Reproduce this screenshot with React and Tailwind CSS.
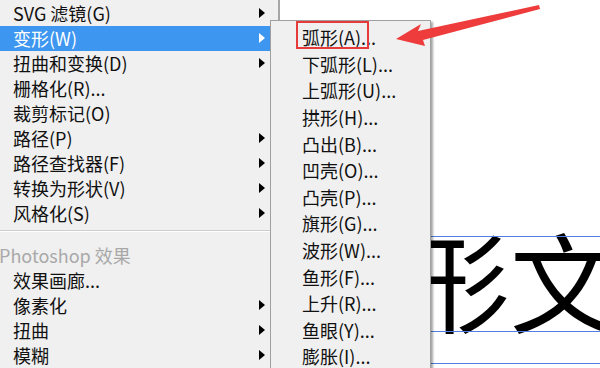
import React from "react";

const mainItems = [
  { label: "SVG 滤镜(G)", sub: true },
  { label: "变形(W)", sub: true, active: true },
  { label: "扭曲和变换(D)", sub: true },
  { label: "栅格化(R)..." },
  { label: "裁剪标记(O)" },
  { label: "路径(P)", sub: true },
  { label: "路径查找器(F)", sub: true },
  { label: "转换为形状(V)", sub: true },
  { label: "风格化(S)", sub: true },
];

const psItems = [
  { label: "效果画廊..." },
  { label: "像素化", sub: true },
  { label: "扭曲", sub: true },
  { label: "模糊", sub: true },
];

const warpItems = [
  "弧形(A)...",
  "下弧形(L)...",
  "上弧形(U)...",
  "拱形(H)...",
  "凸出(B)...",
  "凹壳(O)...",
  "凸壳(P)...",
  "旗形(G)...",
  "波形(W)...",
  "鱼形(F)...",
  "上升(R)...",
  "鱼眼(Y)...",
  "膨胀(I)...",
];

function Caret({ white }) {
  return (
    <svg width="6" height="10" viewBox="0 0 6 10" className="ml-auto mr-[13px] shrink-0">
      <path d="M0 0 L6 5 L0 10 Z" fill={white ? "#ffffff" : "#000000"} />
    </svg>
  );
}

function MenuRow({ item }) {
  return (
    <div
      className={
        "h-[25px] flex items-center pl-[13px] whitespace-nowrap " +
        (item.active ? "bg-[#3d96ef] text-white" : "text-[#111]")
      }
    >
      <span>{item.label}</span>
      {item.sub && <Caret white={item.active} />}
    </div>
  );
}

export default function App() {
  return (
    <div
      className="relative w-[600px] h-[368px] overflow-hidden bg-white flex text-[18px] leading-none"
      style={{ fontFamily: '"Noto Sans CJK SC", "Noto Sans", sans-serif' }}
    >
      {/* main effect menu */}
      <div className="w-[280px] h-full shrink-0 bg-[#f0f0f0] border-r-2 border-[#a6a6a6] pt-[0.5px]">
        {mainItems.map((it) => (
          <MenuRow key={it.label} item={it} />
        ))}
        <div className="pt-[4px] pb-[10px]">
          <div className="h-[2px] bg-[#cdcdcd] border-b border-white" />
        </div>
        <div className="h-[26px] flex items-center -ml-[1px] text-[#a9a9a9] whitespace-nowrap">Photoshop 效果</div>
        {psItems.map((it) => (
          <MenuRow key={it.label} item={it} />
        ))}
      </div>

      {/* document canvas */}
      <div className="relative flex-1 h-full bg-white">
        <div className="absolute left-[122px] top-[224px] text-[108px] leading-none text-black whitespace-nowrap">
          形文
        </div>
        <div className="absolute left-0 right-0 top-[236px] h-px bg-[#4f7fe3]" />
        <div className="absolute left-0 right-0 top-[331px] h-px bg-[#4f7fe3]" />
        <div className="absolute left-0 right-0 top-[363px] h-px bg-[#4f7fe3]" />
      </div>

      {/* warp submenu */}
      <div className="absolute left-[270px] top-[20px] w-[161px] h-[360px] flex flex-col bg-[#f0f0f0] border border-[#a0a0a0] shadow-[2px_2px_2px_rgba(0,0,0,0.35)] pt-[3px]">
        {warpItems.map((label, i) => (
          <div key={label} className="relative h-[26.6px] flex items-center pl-[31px] text-[#111] whitespace-nowrap">
            {label}
            {i === 0 && (
              <div className="absolute left-[25px] top-[-3px] w-[73px] h-[28px] border-2 border-[#e53b3b]" />
            )}
          </div>
        ))}
      </div>

      {/* red arrow */}
      <svg className="absolute left-0 top-0" width="600" height="368" viewBox="0 0 600 368">
        <path d="M396 39 L421 24 L418 31 L539 5 L540 9 L423 40 L425 46 Z" fill="#ee3b3b" />
      </svg>
    </div>
  );
}
